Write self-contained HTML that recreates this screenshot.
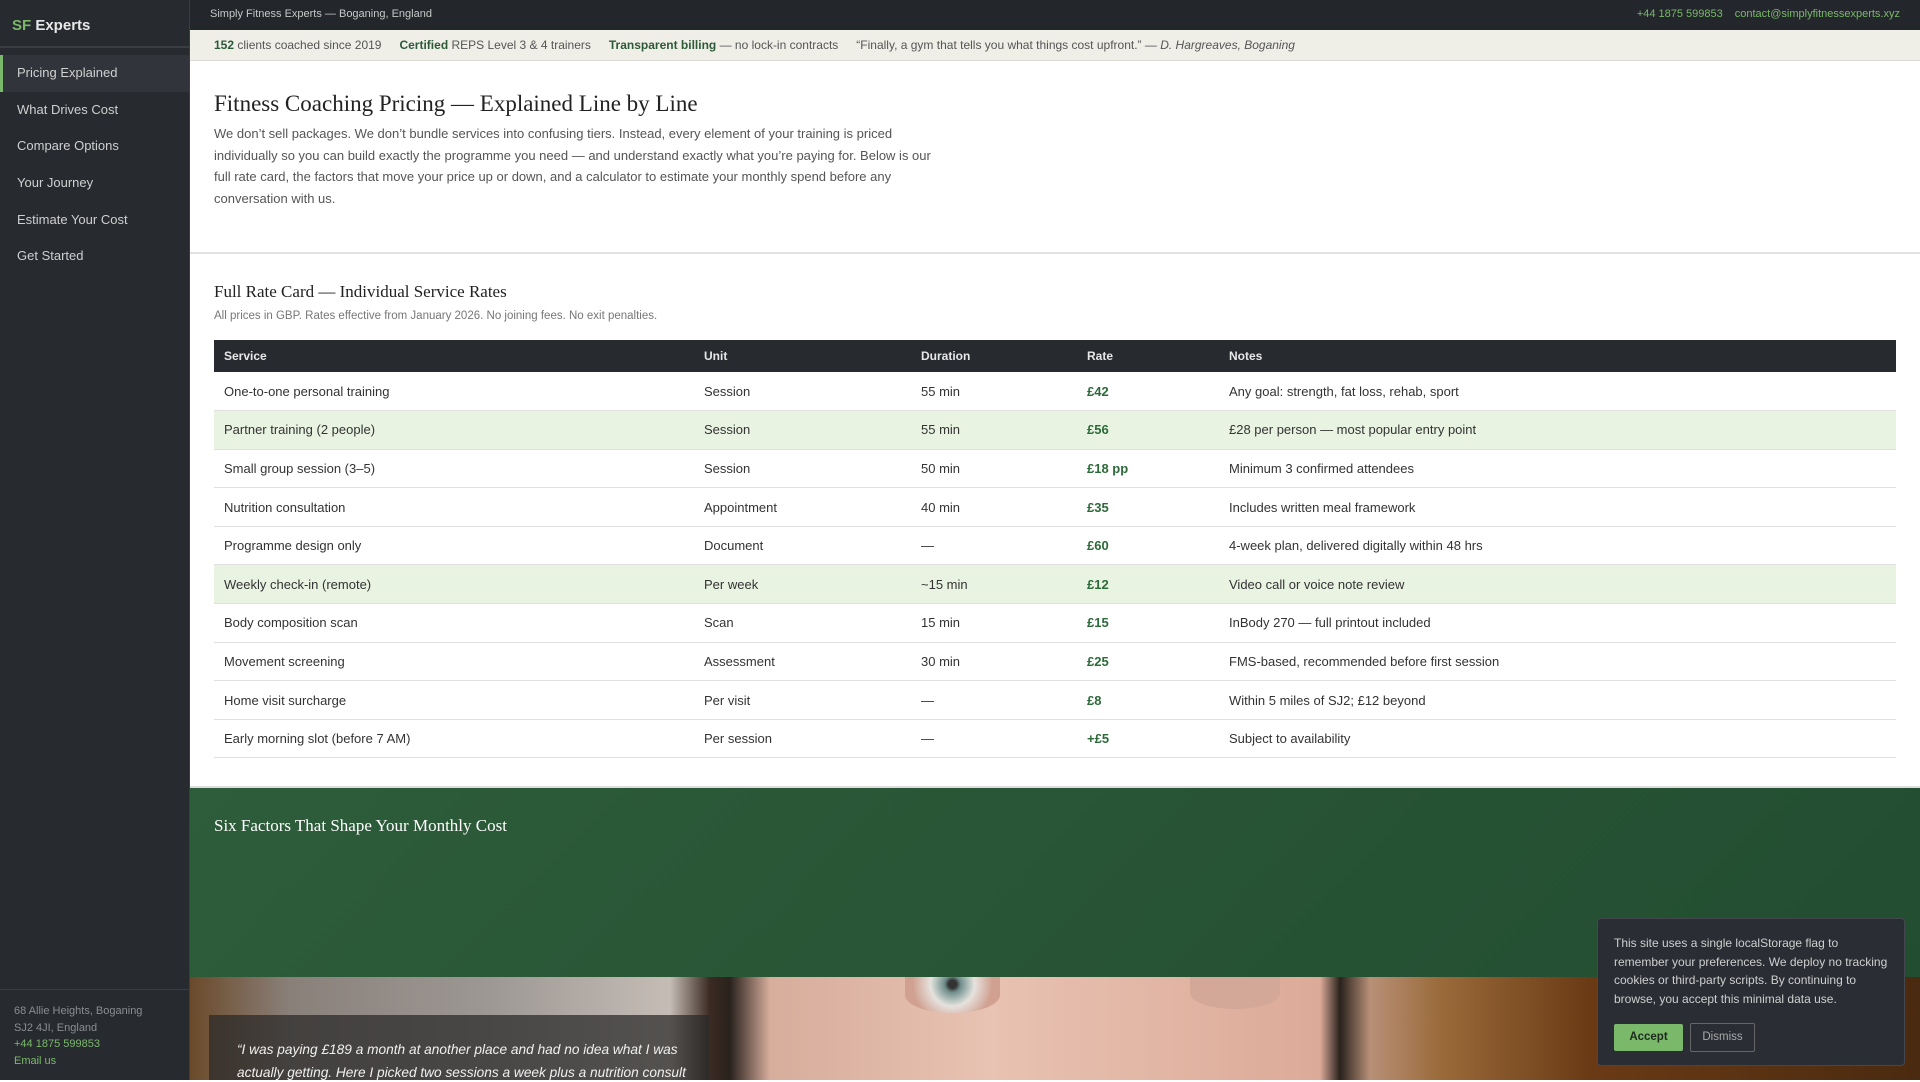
<!DOCTYPE html>
<html><head><meta charset="utf-8"><style>
*{margin:0;padding:0;box-sizing:border-box}
body{width:1920px;height:1080px;overflow:hidden;font-family:"Liberation Sans",sans-serif;background:#fff;position:relative;color:#333}
.side{position:absolute;left:0;top:0;width:190px;height:1080px;background:#272a2f;border-right:1px solid #3a3d42}
.logo{height:48px;border-bottom:2px solid #3a3d42;padding:17px 12px 0;font-weight:bold;font-size:15px;color:#e8e8e8}
.logo span{color:#7ab86a}
.nav{margin-top:7px}
.nav div{height:36.7px;line-height:36.7px;padding-left:17px;font-size:13px;color:#d0d0d0}
.nav .act{background:#31353b;border-left:3px solid #7ab86a;padding-left:14px}
.sfoot{position:absolute;left:0;top:989px;width:190px;border-top:1px solid #3a3d42;padding:13px 14px;font-size:11px;line-height:16.5px;color:#8a8d92}
.sfoot .g{color:#7ab86a}
.top{position:absolute;left:190px;top:0;width:1730px;height:30px;background:#23262b;font-size:11px;color:#c8c8c8;line-height:29px;padding-left:20px}
.top .r{position:absolute;right:20px;top:0;color:#7ab86a}
.top .r span{margin-left:12px}
.stats{position:absolute;left:190px;top:30px;width:1730px;height:31px;background:#efefe8;border-bottom:1px solid #dcdcd6;font-size:12px;color:#555;line-height:30px;padding-left:24px;white-space:nowrap}
.stats b{color:#2d5a38}
.stats .s{margin-right:18px}
.main{position:absolute;left:214px;width:1682px}
h1{font-family:"Liberation Serif",serif;font-weight:normal;font-size:23px;color:#222}
.intro{font-size:13px;line-height:21.5px;color:#555;width:722px;margin-top:6px}
.div{position:absolute;left:190px;top:252px;width:1730px;height:2px;background:#e2e2e2}
h2{font-family:"Liberation Serif",serif;font-weight:normal;font-size:17px;color:#222}
.sub{font-size:11.5px;color:#777;margin-top:8px}
table{border-collapse:collapse;width:1682px;margin-top:18px;font-size:13px}
th{background:#272a2f;color:#e8e8e8;text-align:left;font-size:12px;height:32px;padding-left:10px}
td{height:38.6px;padding-left:10px;border-bottom:1px solid #e0e0e0;color:#333}
tr.h td{background:#e8f3e2}
td.p{color:#2d6a3a;font-weight:bold}
.green{position:absolute;left:190px;top:786px;width:1730px;height:191px;background:linear-gradient(135deg,#2d5d3a,#234d31);border-top:2px solid #ddd}
.green h2{color:#fff;position:absolute;left:24px;top:28px}
.photo{position:absolute;left:190px;top:977px;width:1730px;height:103px;overflow:hidden;background:linear-gradient(90deg,#6b4a2a 0px,#8a807a 100px,#9d9894 300px,#c5bcb5 480px,#3a2a22 520px,#2a221d 540px,#d7ad9c 580px,#e8c2b2 800px,#dcaa98 1130px,#2a221d 1150px,#b89078 1180px,#9a6a3a 1250px,#6a3a15 1400px,#4a2a10 1730px)}
.eye{position:absolute;left:715px;top:0;width:95px;height:36px;border-radius:0 0 50% 50%;background:radial-gradient(circle at 50% 20%,#333 4px,#6f8c8a 8px,#a8bab6 15px,#e6e2de 22px,#d0a090 40px)}
.eye2{position:absolute;left:1000px;top:0;width:90px;height:32px;border-radius:0 0 50% 50%;background:#d4a898}
.quote{position:absolute;left:19px;top:38px;width:500px;height:80px;background:rgba(40,40,40,.72);padding:24px 8px 0 28px;font-style:italic;color:#f0f0f0;font-size:13.7px;line-height:22.5px}
.cookie{position:absolute;left:1597px;top:918px;width:308px;height:148px;background:#2a2d33;border:1px solid #44474d;border-radius:4px;padding:15px 16px;font-size:12px;line-height:18.5px;color:#cfcfcf}
.btns{margin-top:16px}
.acc{display:inline-block;width:69px;height:27px;background:#7ab86a;color:#1e2a1e;font-weight:bold;font-size:11.5px;text-align:center;line-height:27px;border-radius:2px}
.dis{display:inline-block;width:65px;height:29px;border:1px solid #666;color:#aaa;font-size:11.5px;text-align:center;line-height:27px;border-radius:2px;margin-left:7px;vertical-align:top;margin-top:-1px}
</style></head><body>
<div class="side">
<div class="logo"><span>SF</span> Experts</div>
<div class="nav">
<div class="act">Pricing Explained</div>
<div>What Drives Cost</div>
<div>Compare Options</div>
<div>Your Journey</div>
<div>Estimate Your Cost</div>
<div>Get Started</div>
</div>
<div class="sfoot">68 Allie Heights, Boganing<br>SJ2 4JI, England<br><span class="g">+44 1875 599853</span><br><span class="g">Email us</span></div>
</div>
<div class="top">Simply Fitness Experts — Boganing, England<div class="r"><span>+44 1875 599853</span><span>contact@simplyfitnessexperts.xyz</span></div></div>
<div class="stats"><span class="s"><b>152</b> clients coached since 2019</span><span class="s"><b>Certified</b> REPS Level 3 &amp; 4 trainers</span><span class="s"><b>Transparent billing</b> — no lock-in contracts</span><span>“Finally, a gym that tells you what things cost upfront.” — <i>D. Hargreaves, Boganing</i></span></div>
<div class="main" style="top:91px">
<h1>Fitness Coaching Pricing — Explained Line by Line</h1>
<p class="intro">We don’t sell packages. We don’t bundle services into confusing tiers. Instead, every element of your training is priced individually so you can build exactly the programme you need — and understand exactly what you’re paying for. Below is our full rate card, the factors that move your price up or down, and a calculator to estimate your monthly spend before any conversation with us.</p>
</div>
<div class="div"></div>
<div class="main" style="top:282px">
<h2>Full Rate Card — Individual Service Rates</h2>
<p class="sub">All prices in GBP. Rates effective from January 2026. No joining fees. No exit penalties.</p>
<table>
<tr><th style="width:480px">Service</th><th style="width:217px">Unit</th><th style="width:166px">Duration</th><th style="width:142px">Rate</th><th>Notes</th></tr>
<tr><td>One-to-one personal training</td><td>Session</td><td>55 min</td><td class="p">£42</td><td>Any goal: strength, fat loss, rehab, sport</td></tr>
<tr class="h"><td>Partner training (2 people)</td><td>Session</td><td>55 min</td><td class="p">£56</td><td>£28 per person — most popular entry point</td></tr>
<tr><td>Small group session (3–5)</td><td>Session</td><td>50 min</td><td class="p">£18 pp</td><td>Minimum 3 confirmed attendees</td></tr>
<tr><td>Nutrition consultation</td><td>Appointment</td><td>40 min</td><td class="p">£35</td><td>Includes written meal framework</td></tr>
<tr><td>Programme design only</td><td>Document</td><td>—</td><td class="p">£60</td><td>4-week plan, delivered digitally within 48 hrs</td></tr>
<tr class="h"><td>Weekly check-in (remote)</td><td>Per week</td><td>~15 min</td><td class="p">£12</td><td>Video call or voice note review</td></tr>
<tr><td>Body composition scan</td><td>Scan</td><td>15 min</td><td class="p">£15</td><td>InBody 270 — full printout included</td></tr>
<tr><td>Movement screening</td><td>Assessment</td><td>30 min</td><td class="p">£25</td><td>FMS-based, recommended before first session</td></tr>
<tr><td>Home visit surcharge</td><td>Per visit</td><td>—</td><td class="p">£8</td><td>Within 5 miles of SJ2; £12 beyond</td></tr>
<tr><td>Early morning slot (before 7 AM)</td><td>Per session</td><td>—</td><td class="p">+£5</td><td>Subject to availability</td></tr>
</table>
</div>
<div class="green"><h2>Six Factors That Shape Your Monthly Cost</h2></div>
<div class="photo"><div class="eye"></div><div class="eye2"></div>
<div class="quote">“I was paying £189 a month at another place and had no idea what I was actually getting. Here I picked two sessions a week plus a nutrition consult</div></div>
<div class="cookie">This site uses a single localStorage flag to remember your preferences. We deploy no tracking cookies or third-party scripts. By continuing to browse, you accept this minimal data use.
<div class="btns"><span class="acc">Accept</span><span class="dis">Dismiss</span></div></div>
</body></html>
